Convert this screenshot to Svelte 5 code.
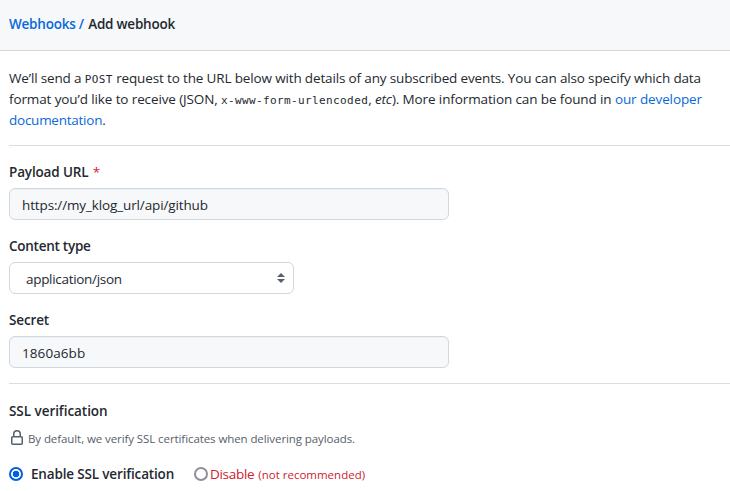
<script>
  let url = $state('https://my_klog_url/api/github');
  let secret = $state('1860a6bb');
  let ssl = $state('on');
</script>

<div class="page">
  <header><h2><a href="#hooks">Webhooks /</a> <span>Add webhook</span></h2></header>
  <main>
    <div class="intro">
      <div class="l1">We’ll send a <code>POST</code> request to the URL below with details of any subscribed events. You can also specify which data</div>
      <div class="l2">format you’d like to receive (JSON, <code>x-www-form-urlencoded</code>, <em>etc</em>). More information can be found in <a href="#docs">our developer</a></div>
      <div class="l3"><a href="#docs">documentation</a>.</div>
    </div>
    <form>
      <section>
        <label for="url">Payload URL <b class="star">*</b></label>
        <input id="url" class="field url" bind:value={url} />
      </section>
      <section>
        <label for="type" class="ct">Content type</label>
        <div class="select">
          <button type="button" id="type">application/json</button>
          <svg width="8" height="10" viewBox="0 0 8 10"><path d="M4 0 8 4H0ZM0 6h8L4 10Z" fill="#57606a" /></svg>
        </div>
      </section>
      <section>
        <label for="secret">Secret</label>
        <input id="secret" class="field secret" bind:value={secret} />
      </section>
    </form>
    <div class="ssl">
      <h3>SSL verification</h3>
      <p>
        <svg width="16" height="16" viewBox="0 0 16 16"><path fill="#57606a" d="M4 4a4 4 0 0 1 8 0v2h.25c.966 0 1.75.784 1.75 1.75v5.5A1.75 1.75 0 0 1 12.25 15h-8.5A1.75 1.75 0 0 1 2 13.250v-5.5C2 6.784 2.784 6 3.75 6H4Zm8.25 3.500h-8.500a.25.25 0 0 0-.25.25v5.500c0 .138.112.25.25.25h8.500a.25.25 0 0 0 .25-.25v-5.500a.25.25 0 0 0-.25-.25ZM10.500 6V4a2.500 2.500 0 1 0-5 0v2Z" /></svg>
        <span>By default, we verify SSL certificates when delivering payloads.</span>
      </p>
      <div class="choices">
        <label class="on"><input type="radio" name="ssl" value="on" bind:group={ssl} /><span>Enable SSL verification</span></label>
        <label class="off"><input type="radio" name="ssl" value="off" bind:group={ssl} /><span class="dis">Disable</span><small>(not recommended)</small></label>
      </div>
    </div>
  </main>
</div>

<style>
  :global(body) { margin: 0; background: #fff; }
  .page { width: 730px; height: 491px; overflow: hidden; font: 13.5px/21px "Open Sans", "Noto Sans", sans-serif; color: #24292f; white-space: nowrap; }
  header { box-sizing: border-box; height: 51px; padding: 14px 9px 0; background: #f6f8fa; border-bottom: 1px solid #d0d7de; }
  h2, h3, p { margin: 0; }
  h2 { font-size: 13.5px; line-height: 21px; font-weight: 560; letter-spacing: -0.22px; }
  h2 span { margin-left: 1px; }
  a { color: #0969da; text-decoration: none; }
  main { padding-left: 9px; }
  .intro { padding-top: 17px; height: 77px; border-bottom: 1px solid #d8dee4; }
  .l1 { letter-spacing: -0.148px; }
  .l2 { letter-spacing: -0.115px; }
  .l3 { letter-spacing: -0.25px; }
  code { font: 11px/1 "DejaVu Sans Mono", monospace; letter-spacing: 0.38px; }
  form { height: 237px; border-bottom: 1px solid #d8dee4; }
  section { height: 58px; padding-top: 16px; }
  label { display: block; font-weight: 560; line-height: 21px; height: 26px; letter-spacing: -0.15px; }
  .ct { letter-spacing: -0.26px; }
  .star { color: #cf222e; font-weight: 400; margin-left: 1px; }
  .field, button { display: block; box-sizing: border-box; height: 32px; width: 440px; margin: 0; padding: 3px 12px 1px; border: 1px solid #d0d7de; border-radius: 6px; background: #f6f8fa; font: inherit; color: inherit; outline: 0; box-shadow: inset 0 1px 0 rgba(208, 215, 222, 0.2); }
  .field.url { letter-spacing: -0.13px; }
  .field.secret { letter-spacing: 0.08px; }
  .select { display: grid; width: 285px; align-items: center; }
  .select > * { grid-area: 1 / 1; }
  .select svg { justify-self: end; margin-right: 9px; }
  button { width: 285px; padding-left: 16px; text-align: left; background: #fff; box-shadow: none; letter-spacing: -0.31px; }
  .ssl { padding-top: 17px; }
  h3 { font-size: 13.5px; font-weight: 560; line-height: 21px; letter-spacing: -0.05px; }
  p { display: flex; align-items: center; height: 20px; margin-top: 7px; color: #57606a; font-size: 11.5px; gap: 3px; letter-spacing: -0.085px; }
  p svg { margin-top: -3px; }
  p span { margin-top: -2px; }
  .choices { display: flex; margin-top: 15px; }
  .choices label { display: flex; align-items: center; height: 21px; }
  .choices input { appearance: none; box-sizing: border-box; width: 14px; height: 14px; margin: 0 0 2px; border: 2px solid #8f8f9d; border-radius: 50%; background: #fff; }
  .choices input:checked { border-color: #0060df; background: radial-gradient(circle, #0060df 3px, #fff 3.6px); }
  .choices .on { width: 185px; gap: 8px; letter-spacing: -0.16px; }
  .choices .off { color: #cf222e; font-weight: 400; gap: 2px; letter-spacing: -0.3px; }
  small { font-size: 11.5px; margin-left: 2px; letter-spacing: 0; }
</style>
